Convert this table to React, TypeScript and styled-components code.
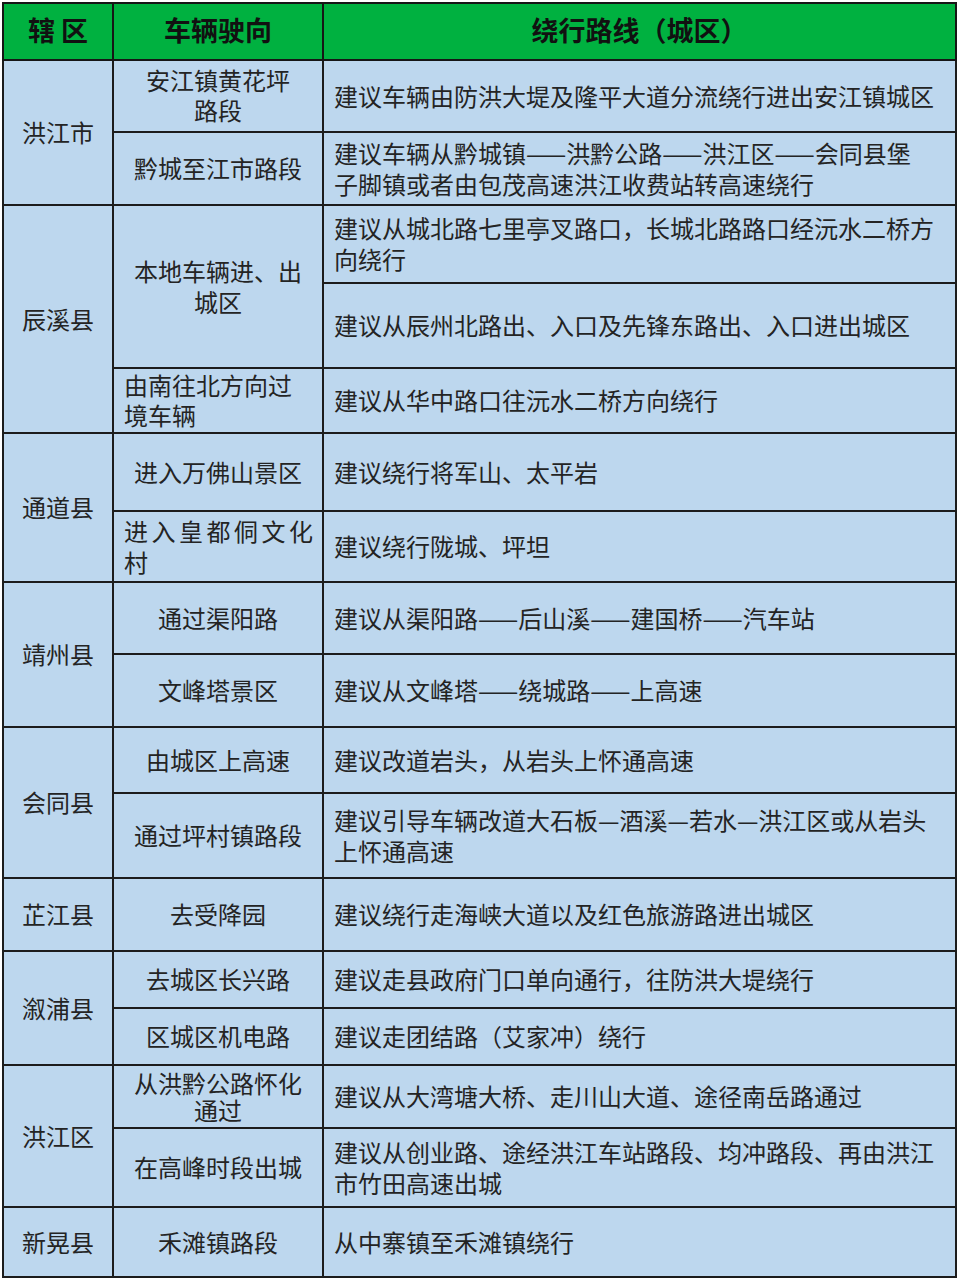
import React from "react";
import styled, { createGlobalStyle } from "styled-components";

const Global = createGlobalStyle`
  html, body { margin: 0; padding: 0; background: #ffffff; }
  body { font-family: "Noto Sans CJK SC", "Noto Sans", sans-serif; }
`;

const Page = styled.div`
  padding: 2px 0 0 2px;
`;

const Table = styled.table`
  border-collapse: collapse;
  table-layout: fixed;
  width: 953px;
  font-family: "Noto Sans CJK SC", "Noto Sans", sans-serif;
  color: #242424;
`;

const Col = styled.col<{ $w: number }>`
  width: ${(p) => p.$w}px;
`;

const Row = styled.tr<{ $h: number }>`
  height: ${(p) => p.$h}px;
`;

const HeadCell = styled.th`
  background: #00b140;
  border: 2px solid #161616;
  font-size: 27px;
  font-weight: 700;
  color: #111111;
  text-align: center;
  vertical-align: middle;
  padding: 0 0 3px 0;
  line-height: 30px;
`;

const Cell = styled.td`
  background: #bdd7ee;
  border: 2px solid #1c1c1c;
  font-size: 24px;
  line-height: 31px;
  vertical-align: middle;
  padding: 0 0 2px 0;
`;

const DistrictCell = styled(Cell)`
  text-align: center;
`;

const DirectionCell = styled(Cell)<{ $align: "center" | "left" | "justify"; $lh: number }>`
  text-align: ${(p) => (p.$align === "center" ? "center" : "left")};
  padding: ${(p) => (p.$align === "center" ? "0 4px 2px" : "0 9px 2px 10px")};
  line-height: ${(p) => p.$lh}px;
`;

const RouteCell = styled(Cell)`
  text-align: left;
  padding: 0 4px 2px 10px;
`;

const Line = styled.span<{ $justify?: boolean }>`
  display: block;
  white-space: nowrap;
  ${(p) =>
    p.$justify
      ? `text-align: justify; text-align-last: justify; white-space: normal;`
      : ""}
`;

type Route = { lines: string[]; h: number };
type Item = { dir: string[]; align?: "center" | "left" | "justify"; lh?: number; routes: Route[] };
type Group = { district: string; items: Item[] };

const data: Group[] = [
  {
    district: "洪江市",
    items: [
      { dir: ["安江镇黄花坪", "路段"], lh: 30, routes: [{ lines: ["建议车辆由防洪大堤及隆平大道分流绕行进出安江镇城区"], h: 72 }] },
      {
        dir: ["黔城至江市路段"],
        routes: [
          {
            lines: ["建议车辆从黔城镇——洪黔公路——洪江区——会同县堡", "子脚镇或者由包茂高速洪江收费站转高速绕行"],
            h: 73,
          },
        ],
      },
    ],
  },
  {
    district: "辰溪县",
    items: [
      {
        dir: ["本地车辆进、出", "城区"],
        routes: [
          { lines: ["建议从城北路七里亭叉路口，长城北路路口经沅水二桥方", "向绕行"], h: 78 },
          { lines: ["建议从辰州北路出、入口及先锋东路出、入口进出城区"], h: 85 },
        ],
      },
      { dir: ["由南往北方向过", "境车辆"], align: "left", lh: 30, routes: [{ lines: ["建议从华中路口往沅水二桥方向绕行"], h: 65 }] },
    ],
  },
  {
    district: "通道县",
    items: [
      { dir: ["进入万佛山景区"], routes: [{ lines: ["建议绕行将军山、太平岩"], h: 78 }] },
      { dir: ["进入皇都侗文化", "村"], align: "justify", routes: [{ lines: ["建议绕行陇城、坪坦"], h: 71 }] },
    ],
  },
  {
    district: "靖州县",
    items: [
      { dir: ["通过渠阳路"], routes: [{ lines: ["建议从渠阳路——后山溪——建国桥——汽车站"], h: 72 }] },
      { dir: ["文峰塔景区"], routes: [{ lines: ["建议从文峰塔——绕城路——上高速"], h: 73 }] },
    ],
  },
  {
    district: "会同县",
    items: [
      { dir: ["由城区上高速"], routes: [{ lines: ["建议改道岩头，从岩头上怀通高速"], h: 66 }] },
      {
        dir: ["通过坪村镇路段"],
        routes: [{ lines: ["建议引导车辆改道大石板—酒溪—若水—洪江区或从岩头", "上怀通高速"], h: 85 }],
      },
    ],
  },
  {
    district: "芷江县",
    items: [{ dir: ["去受降园"], routes: [{ lines: ["建议绕行走海峡大道以及红色旅游路进出城区"], h: 73 }] }],
  },
  {
    district: "溆浦县",
    items: [
      { dir: ["去城区长兴路"], routes: [{ lines: ["建议走县政府门口单向通行，往防洪大堤绕行"], h: 57 }] },
      { dir: ["区城区机电路"], routes: [{ lines: ["建议走团结路（艾家冲）绕行"], h: 57 }] },
    ],
  },
  {
    district: "洪江区",
    items: [
      {
        dir: ["从洪黔公路怀化", "通过"],
        lh: 27,
        routes: [{ lines: ["建议从大湾塘大桥、走川山大道、途径南岳路通过"], h: 63 }],
      },
      {
        dir: ["在高峰时段出城"],
        routes: [{ lines: ["建议从创业路、途经洪江车站路段、均冲路段、再由洪江", "市竹田高速出城"], h: 79 }],
      },
    ],
  },
  {
    district: "新晃县",
    items: [{ dir: ["禾滩镇路段"], routes: [{ lines: ["从中寨镇至禾滩镇绕行"], h: 70 }] }],
  },
];

export default function App() {
  const rows: React.ReactNode[] = [];
  data.forEach((g, gi) => {
    const groupSpan = g.items.reduce((n, it) => n + it.routes.length, 0);
    g.items.forEach((it, ii) => {
      it.routes.forEach((r, ri) => {
        rows.push(
          <Row key={`${gi}-${ii}-${ri}`} $h={r.h}>
            {ii === 0 && ri === 0 && <DistrictCell rowSpan={groupSpan}>{g.district}</DistrictCell>}
            {ri === 0 && (
              <DirectionCell rowSpan={it.routes.length} $align={it.align ?? "center"} $lh={it.lh ?? 31}>
                {it.dir.map((l, li) => (
                  <Line key={li} $justify={it.align === "justify" && li === 0}>
                    {l}
                  </Line>
                ))}
              </DirectionCell>
            )}
            <RouteCell>
              {r.lines.map((l, li) => (
                <Line key={li}>{l}</Line>
              ))}
            </RouteCell>
          </Row>
        );
      });
    });
  });

  return (
    <Page>
      <Global />
      <Table>
        <colgroup>
          <Col $w={110} />
          <Col $w={210} />
          <Col $w={633} />
        </colgroup>
        <thead>
          <Row $h={57}>
            <HeadCell>辖 区</HeadCell>
            <HeadCell>车辆驶向</HeadCell>
            <HeadCell>绕行路线（城区）</HeadCell>
          </Row>
        </thead>
        <tbody>{rows}</tbody>
      </Table>
    </Page>
  );
}
